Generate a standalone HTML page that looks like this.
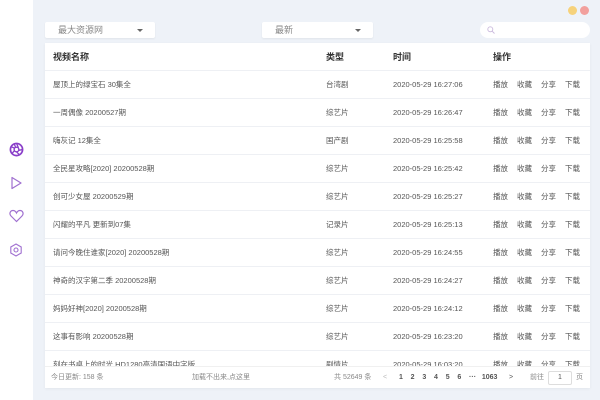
<!DOCTYPE html>
<html><head><meta charset="utf-8"><style>
*{margin:0;padding:0;box-sizing:border-box}
body{width:600px;height:400px;overflow:hidden;background:#eef2f8;font-family:"Liberation Sans","Noto Sans CJK SC",sans-serif;position:relative;color:#555}
.side{position:absolute;left:0;top:0;width:33px;height:400px;background:#fff}
.ic{position:absolute;left:9px}
.sel{position:absolute;top:22px;height:16px;background:#fff;border-radius:2px;box-shadow:0 1px 2px rgba(0,0,0,.06);font-size:9px;color:#888;line-height:16px;padding-left:13px}
.sel:after{content:"";position:absolute;right:12px;top:7px;border:3px solid transparent;border-top:3px solid #666}
.search{position:absolute;left:480px;top:22px;width:110px;height:16px;background:#fff;border-radius:8px}
.dot{position:absolute;top:6px;width:9px;height:9px;border-radius:50%}
.card{position:absolute;left:45px;top:43px;width:545px;height:345px;background:#fff;overflow:hidden;box-shadow:0 1px 3px rgba(0,0,0,.05)}
.row{position:absolute;left:0;width:545px;height:28px;border-bottom:1px solid #eef0f4;font-size:7.5px;color:#555;line-height:28px}
.row span{position:absolute;white-space:nowrap}
.hd{font-size:9px;font-weight:bold;color:#333}
.foot{position:absolute;left:0;top:323px;width:545px;height:22px;background:#fff;font-size:7px;color:#888;line-height:22px;border-top:1px solid #f0f0f0}
.foot span{position:absolute;white-space:nowrap}
</style></head><body>
<div class="side">
<svg class="ic" style="top:142px" width="15" height="15" viewBox="0 0 16 16"><circle cx="8" cy="8" r="6.5" fill="none" stroke="#8a3fc9" stroke-width="1.8"/><circle cx="8" cy="8" r="2.5" fill="none" stroke="#8a3fc9" stroke-width="1.5"/><path d="M8 1.5 L10 6 M14.5 8 L10 9 M11 13.5 L8 10.5 M3 12.5 L6 9 M2 5 L6 6.5 M5.5 2 L7 5.5" stroke="#8a3fc9" stroke-width="1.4"/></svg>
<svg class="ic" style="top:176px" width="14" height="14" viewBox="0 0 14 14"><path d="M3 1.5 L12 7 L3 12.5 Z" fill="none" stroke="#a070d0" stroke-width="1.2" stroke-linejoin="round"/></svg>
<svg class="ic" style="top:209px" width="15" height="14" viewBox="0 0 15 14"><path d="M7.5 12.5 L2 7 C0 5 1 1.5 4 1.5 C6 1.5 7 3 7.5 4 C8 3 9 1.5 11 1.5 C14 1.5 15 5 13 7 Z" fill="none" stroke="#a070d0" stroke-width="1.2"/></svg>
<svg class="ic" style="top:243px" width="14" height="14" viewBox="0 0 14 14"><path d="M7 1 L12.2 4 L12.2 10 L7 13 L1.8 10 L1.8 4 Z" fill="none" stroke="#a070d0" stroke-width="1.1"/><circle cx="7" cy="7" r="2" fill="none" stroke="#a070d0" stroke-width="1.1"/></svg>
</div>
<div class="dot" style="left:568px;background:#f6d27b"></div>
<div class="dot" style="left:580px;background:#f2a09d"></div>
<div class="sel" style="left:45px;width:110px">最大资源网</div>
<div class="sel" style="left:262px;width:111px">最新</div>
<div class="search"><svg style="position:absolute;left:7px;top:4px" width="8" height="8" viewBox="0 0 8 8"><circle cx="3.3" cy="3.3" r="2.5" fill="none" stroke="#c9b8dc" stroke-width="0.9"/><path d="M5.2 5.2 L7.5 7.5" stroke="#c9b8dc" stroke-width="0.9"/></svg></div>
<div class="card">
<div class="row hd" style="top:0"><span style="left:8px">视频名称</span><span style="left:281px">类型</span><span style="left:348px">时间</span><span style="left:448px">操作</span></div>
<div class="row" style="top:28px"><span style="left:8px">屋顶上的绿宝石 30集全</span><span style="left:281px">台湾剧</span><span style="left:348px">2020-05-29 16:27:06</span><span style="left:448px">播放</span><span style="left:472px">收藏</span><span style="left:496px">分享</span><span style="left:520px">下载</span></div>
<div class="row" style="top:56px"><span style="left:8px">一周偶像 20200527期</span><span style="left:281px">综艺片</span><span style="left:348px">2020-05-29 16:26:47</span><span style="left:448px">播放</span><span style="left:472px">收藏</span><span style="left:496px">分享</span><span style="left:520px">下载</span></div>
<div class="row" style="top:84px"><span style="left:8px">嗨灰记 12集全</span><span style="left:281px">国产剧</span><span style="left:348px">2020-05-29 16:25:58</span><span style="left:448px">播放</span><span style="left:472px">收藏</span><span style="left:496px">分享</span><span style="left:520px">下载</span></div>
<div class="row" style="top:112px"><span style="left:8px">全民星攻略[2020] 20200528期</span><span style="left:281px">综艺片</span><span style="left:348px">2020-05-29 16:25:42</span><span style="left:448px">播放</span><span style="left:472px">收藏</span><span style="left:496px">分享</span><span style="left:520px">下载</span></div>
<div class="row" style="top:140px"><span style="left:8px">创可少女屋 20200529期</span><span style="left:281px">综艺片</span><span style="left:348px">2020-05-29 16:25:27</span><span style="left:448px">播放</span><span style="left:472px">收藏</span><span style="left:496px">分享</span><span style="left:520px">下载</span></div>
<div class="row" style="top:168px"><span style="left:8px">闪耀的平凡 更新到07集</span><span style="left:281px">记录片</span><span style="left:348px">2020-05-29 16:25:13</span><span style="left:448px">播放</span><span style="left:472px">收藏</span><span style="left:496px">分享</span><span style="left:520px">下载</span></div>
<div class="row" style="top:196px"><span style="left:8px">请问今晚住谁家[2020] 20200528期</span><span style="left:281px">综艺片</span><span style="left:348px">2020-05-29 16:24:55</span><span style="left:448px">播放</span><span style="left:472px">收藏</span><span style="left:496px">分享</span><span style="left:520px">下载</span></div>
<div class="row" style="top:224px"><span style="left:8px">神奇的汉字第二季 20200528期</span><span style="left:281px">综艺片</span><span style="left:348px">2020-05-29 16:24:27</span><span style="left:448px">播放</span><span style="left:472px">收藏</span><span style="left:496px">分享</span><span style="left:520px">下载</span></div>
<div class="row" style="top:252px"><span style="left:8px">妈妈好神[2020] 20200528期</span><span style="left:281px">综艺片</span><span style="left:348px">2020-05-29 16:24:12</span><span style="left:448px">播放</span><span style="left:472px">收藏</span><span style="left:496px">分享</span><span style="left:520px">下载</span></div>
<div class="row" style="top:280px"><span style="left:8px">这事有影响 20200528期</span><span style="left:281px">综艺片</span><span style="left:348px">2020-05-29 16:23:20</span><span style="left:448px">播放</span><span style="left:472px">收藏</span><span style="left:496px">分享</span><span style="left:520px">下载</span></div>
<div class="row" style="top:308px"><span style="left:8px">刻在书桌上的时光 HD1280高清国语中字版</span><span style="left:281px">剧情片</span><span style="left:348px">2020-05-29 16:03:20</span><span style="left:448px">播放</span><span style="left:472px">收藏</span><span style="left:496px">分享</span><span style="left:520px">下载</span></div>
<div class="foot"><span style="left:6px">今日更新: 158 条</span><span style="left:147px">加载不出来,点这里</span><span style="left:289px">共 52649 条</span><span style="left:338px;color:#bbb">&lt;</span><span style="left:354px;color:#555;font-weight:bold">1&nbsp;&nbsp;&nbsp;&nbsp;2&nbsp;&nbsp;&nbsp;&nbsp;3&nbsp;&nbsp;&nbsp;&nbsp;4&nbsp;&nbsp;&nbsp;&nbsp;5&nbsp;&nbsp;&nbsp;&nbsp;6&nbsp;&nbsp;&nbsp;&nbsp;···&nbsp;&nbsp;&nbsp;1063</span><span style="left:464px;color:#555">&gt;</span><span style="left:485px">前往</span><span style="left:503px;top:4px;width:24px;height:14px;border:1px solid #ddd;border-radius:2px;line-height:12px;text-align:center;color:#555">1</span><span style="left:531px">页</span></div>
</div>
</body></html>
